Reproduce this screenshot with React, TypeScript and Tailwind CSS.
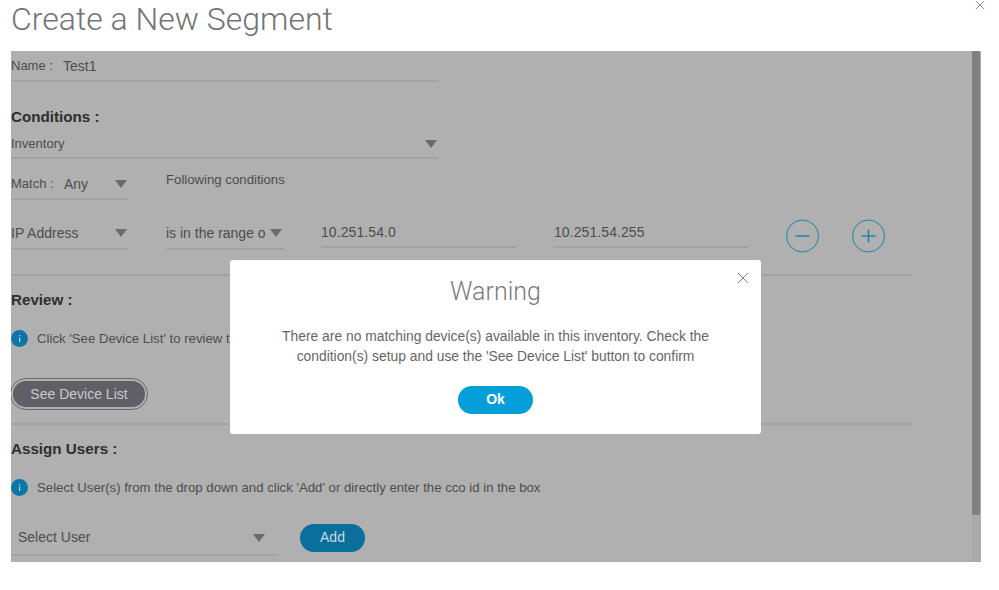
const BODY = "font-['Liberation_Sans',Arial,sans-serif]";

function Caret({ className = '' }: { className?: string }) {
  return (
    <svg width="12" height="8" viewBox="0 0 12 8" className={`shrink-0 ${className}`}>
      <polygon points="0,0 12,0 6,8" fill="#6b6b6b" />
    </svg>
  );
}

function InfoIcon() {
  return (
    <svg width="17" height="17" viewBox="0 0 17 17" className="shrink-0">
      <circle cx="8.5" cy="8.5" r="8.5" fill="#0c76a8" />
      <rect x="8" y="7.5" width="1.2" height="4.5" fill="#b9d6e4" />
      <rect x="8" y="5" width="1.2" height="1.3" fill="#b9d6e4" />
    </svg>
  );
}

function CircleBtn({ plus }: { plus?: boolean }) {
  return (
    <svg width="33" height="34" viewBox="0 0 33 34" className="shrink-0">
      <circle cx="16.5" cy="17" r="16" fill="none" stroke="#1d84a9" strokeWidth="1" />
      <path d={plus ? 'M9.5 17H23.5M16.5 10.5V23.5' : 'M9.5 17H23.5'} stroke="#1d84a9" strokeWidth="1.5" fill="none" />
    </svg>
  );
}

function CloseX({ size }: { size: number }) {
  return (
    <svg width={size} height={size} viewBox="0 0 12 12">
      <path d="M1 1L11 11M11 1L1 11" stroke="#808080" strokeWidth="1" fill="none" />
    </svg>
  );
}

function Divider() {
  return <div className="w-[901px] h-[2px] bg-[#a3a3a3]" />;
}

function Heading({ children, className = '' }: { children: string; className?: string }) {
  return <h3 className={`h-5 leading-5 text-[15.2px] font-bold text-[#2e2e2e] ${className}`}>{children}</h3>;
}

function Hint({ children, className = '' }: { children: string; className?: string }) {
  return (
    <div className={`flex items-center gap-[9px] h-[17px] text-[13.2px] text-[#4d4d4d] whitespace-nowrap ${className}`}>
      <InfoIcon />
      <span>{children}</span>
    </div>
  );
}

export default function App() {
  return (
    <div className={`relative w-[999px] h-[590px] bg-white overflow-hidden ${BODY}`}>
      <h1 className="h-[51px] pl-[11px] text-[32px] leading-[38px] font-light text-[#737476] font-['Roboto',sans-serif]">
        Create a New Segment
      </h1>
      <button className="absolute right-[14px] top-0"><CloseX size={10} /></button>

      <div className="flex w-[970px] h-[511px] ml-[11px] bg-[#b0b0b0] overflow-hidden">
        <div className="flex-1 text-[14px] text-[#4d4d4d]">
          <div className="w-[427px] h-[31px] pt-[1px] border-b-2 border-[#a3a3a3] flex items-center">
            <span className="w-[52px] text-[13px]">Name :</span>
            <span>Test1</span>
          </div>

          <Heading className="mt-[25px]">Conditions :</Heading>

          <div className="w-[427px] h-[32px] pt-[3px] border-b-2 border-[#a3a3a3] flex items-center justify-between">
            <span className="text-[13px]">Inventory</span>
            <Caret className="mr-[1px]" />
          </div>

          <div className="flex items-start">
            <div className="w-[117px] h-[41px] pt-[11px] border-b-2 border-[#a3a3a3] flex items-center">
              <span className="w-[53px] text-[13px]">Match :</span>
              <span>Any</span>
              <Caret className="ml-auto mr-[1px]" />
            </div>
            <span className="ml-[38px] mt-[12px] text-[13.2px] leading-[17px]">Following conditions</span>
          </div>

          <div className="flex items-start mt-[17px] h-[35px]">
            <div className="w-[117px] h-[33px] pt-[1px] border-b-2 border-[#a3a3a3] flex items-center justify-between">
              <span>IP Address</span>
              <Caret className="mr-[1px]" />
            </div>
            <div className="w-[118px] ml-[38px] h-[33px] pt-[1px] border-b-2 border-[#a3a3a3] flex items-center justify-between">
              <span className="whitespace-nowrap">is in the range o</span>
              <Caret className="mr-[2px]" />
            </div>
            <div className="w-[195px] ml-[37px] h-[31px] pt-[1px] border-b-2 border-[#a3a3a3] flex items-center tracking-[0.08px]">10.251.54.0</div>
            <div className="w-[194px] ml-[38px] h-[31px] pt-[1px] border-b-2 border-[#a3a3a3] flex items-center tracking-[0.08px]">10.251.54.255</div>
            <div className="ml-[38px] mt-[2px] flex gap-[33px]">
              <CircleBtn />
              <CircleBtn plus />
            </div>
          </div>

          <div className="mt-[22px]"><Divider /></div>
          <Heading className="mt-[14px]">Review :</Heading>
          <Hint className="mt-[20px]">Click 'See Device List' to review t</Hint>

          <button className="block mt-[32px] w-[136px] h-[30px] rounded-full bg-[#5f5f65] border-2 border-[#b0b0b0] outline outline-1 outline-[#6a6a70] text-[14px] font-medium text-[#c9c9cc]">
            See Device List
          </button>

          <div className="mt-[14px]"><Divider /></div>
          <Heading className="mt-[14px]">Assign Users :</Heading>
          <Hint className="mt-[20px]">Select User(s) from the drop down and click 'Add' or directly enter the cco id in the box</Hint>

          <div className="flex items-start mt-[28px]">
            <div className="w-[266px] h-[32px] pb-[3px] pl-[7px] border-b-2 border-[#a3a3a3] flex items-center justify-between">
              <span>Select User</span>
              <Caret className="mr-[12px]" />
            </div>
            <button className="ml-[23px] w-[65px] h-[28px] pb-[2px] rounded-full bg-[#0a6f9b] text-[14px] font-medium text-[#c4dbe6]">
              Add
            </button>
          </div>
        </div>

        <div className="w-[8px] mr-[1px] h-full bg-[#a9a9a9]">
          <div className="h-[464px] rounded-[2px] bg-[#808080]" />
        </div>
      </div>

      <div className="absolute left-[230px] top-[260px] w-[531px] h-[174px] rounded-[3px] bg-white flex flex-col items-center">
        <button className="absolute right-[12px] top-[12px]"><CloseX size={12} /></button>
        <h2 className="mt-[16px] h-[32px] leading-[32px] text-[25px] font-light text-[#7a7b7d] font-['Roboto',sans-serif]">Warning</h2>
        <p className="mt-[18px] w-[480px] text-center text-[13.85px] leading-[20px] text-[#666666]">
          There are no matching device(s) available in this inventory. Check the condition(s) setup and use the 'See Device List' button to confirm
        </p>
        <button className="mt-[20px] w-[75px] h-[28px] pb-[2px] rounded-full bg-[#049fd9] text-[14px] font-bold text-white">
          Ok
        </button>
      </div>
    </div>
  );
}
